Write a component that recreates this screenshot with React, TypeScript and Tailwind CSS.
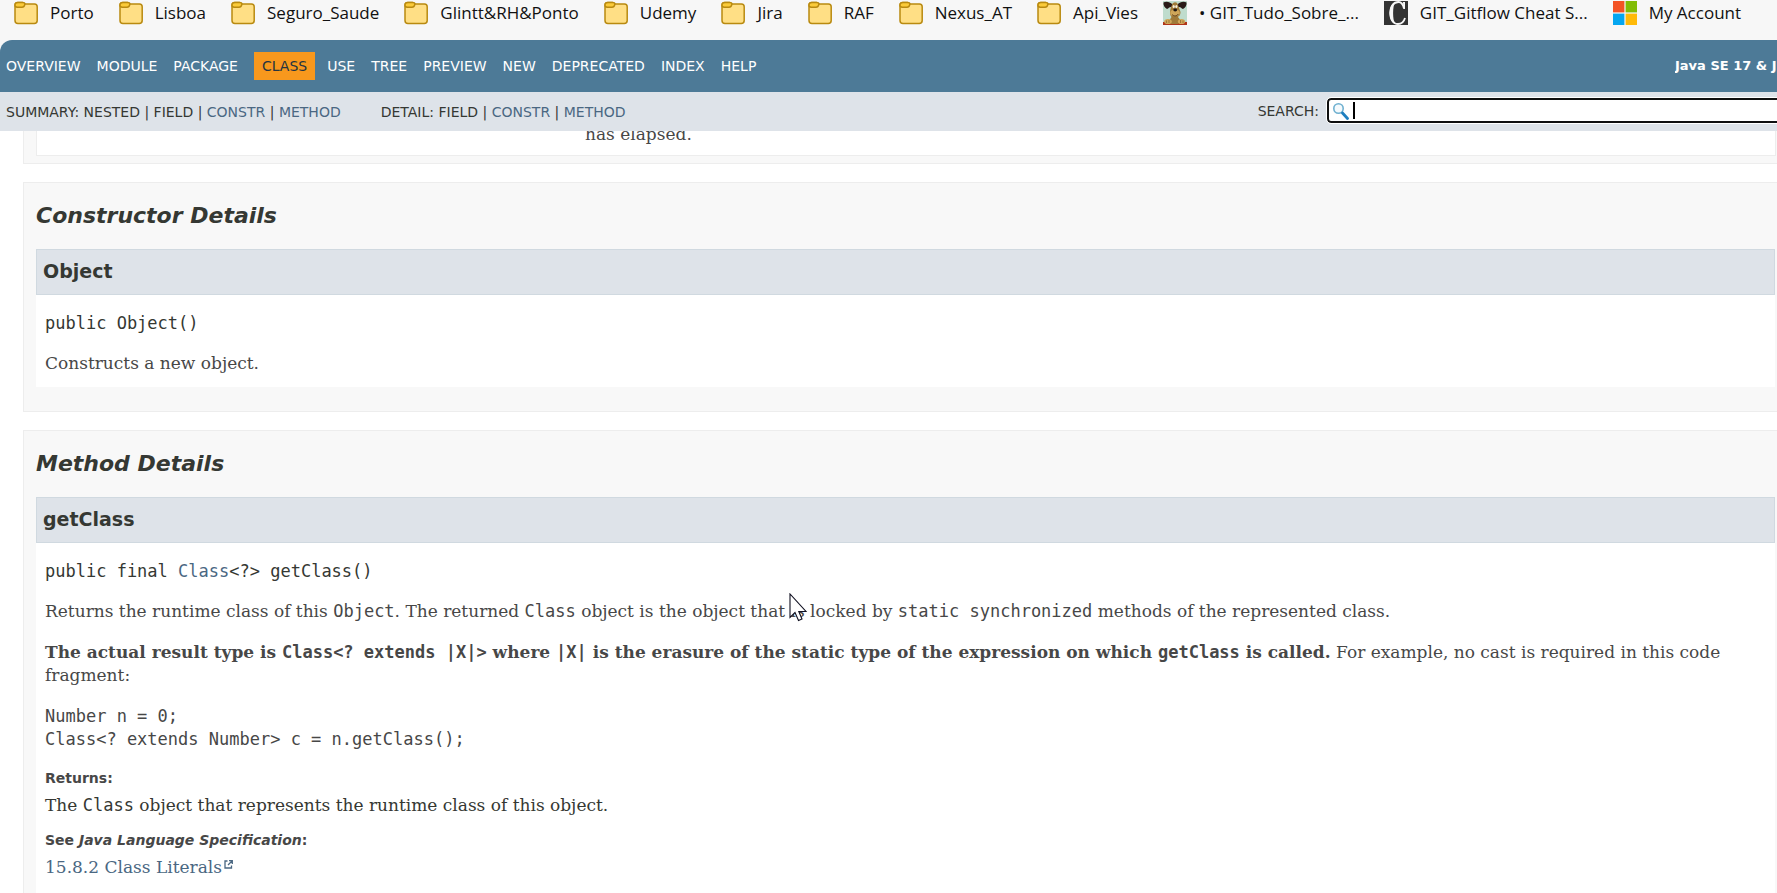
import type { ReactNode } from "react";

const folders = [
  "Porto",
  "Lisboa",
  "Seguro_Saude",
  "Glintt&RH&Ponto",
  "Udemy",
  "Jira",
  "RAF",
  "Nexus_AT",
  "Api_Vies",
];

function FolderIcon() {
  return (
    <svg width="24" height="24" viewBox="0 0 24 24" className="shrink-0" aria-hidden="true">
      <path
        d="M1 4.5C1 2.6 2 1.6 3.8 1.6H8.5L11 3H20.5C22.3 3 23.2 4 23.2 5.8V19.4C23.2 21.4 22.2 22.4 20.2 22.4H4C2 22.4 1 21.4 1 19.4Z"
        fill="#ffdf85"
        stroke="#b98a10"
        strokeWidth="1.5"
      />
      <path
        d="M1 4C1 2.400 2 1.400 3.800 1.400H8.500C10.400 1.400 11.200 2.400 10.800 3.600C10.400 5.200 9.400 6.200 8 6.200H3.200C1.800 6.200 1 5.400 1 4Z"
        fill="#fbcb3a"
        stroke="#b98a10"
        strokeWidth="1.5"
      />
    </svg>
  );
}

function DogIcon() {
  return (
    <svg width="24" height="24" viewBox="0 0 24 24" className="shrink-0" aria-hidden="true">
      <rect width="24" height="24" fill="#bfdccd" />
      <path d="M0 21H24V24H0Z" fill="#b03418" />
      <path d="M9.500 3.500C7 0.500 3 0 0.500 1.500C0 4 1.500 6.500 4 8C6 7.500 6 5.500 9 6Z" fill="#2a1a18" />
      <path d="M14.500 3.500C17 0.500 21 0 23.500 1.500C24 4 22.500 6.500 20 8C18 7.500 18 5.500 15 6Z" fill="#2a1a18" />
      <path d="M9 4C9.500 1 14 0 15 4L17.500 11C17.500 15 15.500 15 15 16L18 20L15 23H8L6 20L8.500 16C6 13 7 8 9 4Z" fill="#a07a38" />
      <ellipse cx="12" cy="12" rx="4.800" ry="3.200" fill="#cfa659" />
      <path d="M9 13.500C11 15.500 13.500 15.500 15.500 13" fill="none" stroke="#5a3a1c" />
      <ellipse cx="12.200" cy="9" rx="1.900" ry="1.400" fill="#1c1412" />
      <ellipse cx="10.700" cy="5.600" rx="1.100" ry="1.500" fill="#f4efdc" />
      <ellipse cx="13.400" cy="5.600" rx="1.100" ry="1.500" fill="#f4efdc" />
      <ellipse cx="5" cy="20.500" rx="3.800" ry="2.600" fill="#cfa659" />
      <ellipse cx="18.500" cy="20.500" rx="3.600" ry="2.600" fill="#cfa659" />
      <path d="M3.500 19.500V22M6 19V22M17.500 19V22M20 19.500V22" stroke="#8a642c" strokeWidth="0.700" />
    </svg>
  );
}

function CheatSheetIcon() {
  return (
    <svg width="24" height="24" viewBox="0 0 24 24" className="shrink-0" aria-hidden="true">
      <rect width="24" height="24" fill="#333333" />
      <path
        d="M20 7.500C19 3 17 1 14.500 1C9.500 1 6.500 5.500 6.500 12C6.500 18.500 9.500 23 14 23C17.500 23 20 20.500 21 17"
        fill="none"
        stroke="#f7f7f7"
        strokeWidth="1.800"
      />
      <path d="M19 1H21V8H19.500Z" fill="#f7f7f7" />
      <path d="M11 1C3.500 4 3.500 20 11 23C8.500 18 8.500 6 11 1Z" fill="#f7f7f7" />
    </svg>
  );
}

function MicrosoftIcon() {
  return (
    <svg width="24" height="24" viewBox="0 0 24 24" className="shrink-0" aria-hidden="true">
      <path d="M0 0H11.400V11.400H0Z" fill="#f35325" />
      <path d="M12.600 0H24V11.400H12.600Z" fill="#81bc06" />
      <path d="M0 12.600H11.400V24H0Z" fill="#05a6f0" />
      <path d="M12.600 12.600H24V24H12.600Z" fill="#ffba08" />
    </svg>
  );
}

function Bookmark({ icon, label }: { icon: ReactNode; label: string }) {
  return (
    <a href="#" className="flex shrink-0 items-center gap-3 whitespace-nowrap">
      {icon}
      <span>{label}</span>
    </a>
  );
}

function BookmarksBar() {
  return (
    <nav
      aria-label="Bookmarks"
      className="flex h-10 items-start gap-[25px] overflow-hidden bg-[#f7f7f7] pl-3.5 font-['Open_Sans',sans-serif] text-[17px] leading-[26px] text-[#111111]"
    >
      {folders.map((name) => (
        <Bookmark key={name} icon={<FolderIcon />} label={name} />
      ))}
      <Bookmark icon={<DogIcon />} label="• GIT_Tudo_Sobre_..." />
      <Bookmark icon={<CheatSheetIcon />} label="GIT_Gitflow Cheat S..." />
      <Bookmark icon={<MicrosoftIcon />} label="My Account" />
    </nav>
  );
}

function NavLinks({ names }: { names: string[] }) {
  return (
    <ul className="flex items-center gap-4 uppercase">
      {names.map((name) => (
        <li key={name}>
          <a href="#">{name}</a>
        </li>
      ))}
    </ul>
  );
}

function TopNav() {
  return (
    <div className="bg-[#f7f7f7]">
      <nav
        aria-label="Documentation"
        className="flex h-[52px] items-center overflow-hidden rounded-tl-xl bg-[#4d7a97] pl-1.5 text-sm text-white"
      >
        <NavLinks names={["Overview", "Module", "Package"]} />
        <span className="mr-3 ml-4 bg-[#f8981d] px-2 py-1 text-[#253441] uppercase">Class</span>
        <NavLinks names={["Use", "Tree", "Preview", "New", "Deprecated", "Index", "Help"]} />
        <div className="ml-auto w-[102px] overflow-hidden text-[13px] font-bold whitespace-nowrap">
          Java SE 17 &amp; JDK 17
        </div>
      </nav>
    </div>
  );
}

function SubLinks({ label, plain }: { label: string; plain: string[] }) {
  return (
    <div className="whitespace-pre">
      {label}: {plain.join(" | ")} |{" "}
      <a href="#" className="text-[#4a6782]">
        CONSTR
      </a>{" "}
      |{" "}
      <a href="#" className="text-[#4a6782]">
        METHOD
      </a>
    </div>
  );
}

function SubNav() {
  return (
    <div className="flex h-[39px] items-center overflow-hidden bg-[#dee3e9] pl-1.5 text-sm text-[#353833]">
      <div className="flex gap-10">
        <SubLinks label="SUMMARY" plain={["NESTED", "FIELD"]} />
        <SubLinks label="DETAIL" plain={["FIELD"]} />
      </div>
      <div className="-mr-2 ml-auto flex items-center gap-2 pb-0.5">
        <label htmlFor="search">SEARCH:</label>
        <div className="flex h-[25px] w-[458px] items-center gap-1 rounded-[4px] border-2 border-[#101010] bg-white pl-1 outline outline-white">
          <svg width="16" height="18" viewBox="0 0 16 18" className="shrink-0" aria-hidden="true">
            <circle cx="5.500" cy="6.500" r="4.700" fill="#f4fafd" stroke="#6fb0d0" strokeWidth="1.600" />
            <path d="M9.500 11L14.500 16.500" stroke="#1f7fbf" strokeWidth="2.800" strokeLinecap="round" />
          </svg>
          <div className="h-[17px] w-0.5 bg-black" />
          <input id="search" type="text" className="min-w-0 flex-1 bg-transparent outline-none" />
        </div>
      </div>
    </div>
  );
}

function DetailSection({ title, member, children }: { title: string; member: string; children: ReactNode }) {
  return (
    <section className="mt-[18px] border border-r-0 border-[#ededed] bg-[#f8f8f8] pr-0.5 pb-6 pl-3">
      <h2 className="pt-[19px] pb-[19px] font-['DejaVu_Sans',sans-serif] text-[22px] leading-7 font-bold text-[#353833] italic">
        {title}
      </h2>
      <h3 className="border border-[#d0d9e0] bg-[#dee3e9] px-1.5 pt-[7px] pb-[9px] font-['DejaVu_Sans',sans-serif] text-[19px] leading-7 font-bold text-[#353833]">
        {member}
      </h3>
      <div className="bg-white px-[9px] pt-[17px] pb-3">{children}</div>
    </section>
  );
}

function Code({ children }: { children: ReactNode }) {
  return <code className="font-['DejaVu_Sans_Mono',monospace] text-[17px]">{children}</code>;
}

function Signature({ children }: { children: ReactNode }) {
  return (
    <div className="font-['DejaVu_Sans_Mono',monospace] text-[17px] leading-[23px] text-[#353833]">{children}</div>
  );
}

function ExternalIcon() {
  return (
    <svg width="9" height="9" viewBox="0 0 9 9" className="mb-2 ml-0.5 inline-block" aria-hidden="true">
      <path d="M3.500 1H1V8H7.500V5.500M5 0.700H8.300V4M8 1L4 5" fill="none" stroke="#4a6782" strokeWidth="1.300" />
    </svg>
  );
}

function Pointer() {
  return (
    <svg width="19" height="29" viewBox="0 0 19 29" className="absolute top-[-7px] left-[744px]" aria-hidden="true">
      <path
        d="M1 1V24.500L6 19.500L9.500 27.500L13 26L9.800 18.500H17Z"
        fill="#ffffff"
        stroke="#101020"
        strokeWidth="1.100"
      />
    </svg>
  );
}

export default function App() {
  return (
    <div className="flex h-screen flex-col overflow-hidden bg-white font-['DejaVu_Sans',sans-serif]">
      <BookmarksBar />
      <TopNav />
      <SubNav />
      <main className="min-h-0 flex-1 overflow-hidden pl-[23px] font-['DejaVu_Serif',serif] text-[17px] leading-[23px] text-[#474747]">
        <section className="-mt-2.5 border border-r-0 border-[#ededed] bg-[#f8f8f8] pr-px pb-[7px] pl-3">
          <div className="border border-[#ededed] bg-white pb-[9px] pl-[548px]">has elapsed.</div>
        </section>
        <DetailSection title="Constructor Details" member="Object">
          <Signature>public Object()</Signature>
          <p className="mt-[17px]">Constructs a new object.</p>
        </DetailSection>
        <DetailSection title="Method Details" member="getClass">
          <Signature>
            public final{" "}
            <a href="#" className="text-[#4a6782]">
              Class
            </a>
            &lt;?&gt; getClass()
          </Signature>
          <div className="relative mt-[17px]">
            <p>
              Returns the runtime class of this <Code>Object</Code>. The returned <Code>Class</Code> object is the
              object that is locked by <Code>static synchronized</Code> methods of the represented class.
            </p>
            <Pointer />
          </div>
          <p className="mt-[18px]">
            <b>
              The actual result type is <Code>Class&lt;? extends |X|&gt;</Code> where <Code>|X|</Code> is the erasure
              of the static type of the expression on which <Code>getClass</Code> is called.
            </b>{" "}
            For example, no cast is required in this code fragment:
          </p>
          <pre className="mt-[18px] font-['DejaVu_Sans_Mono',monospace] text-[17px] leading-[23px]">
            {"Number n = 0;\nClass<? extends Number> c = n.getClass();"}
          </pre>
          <dl className="pb-6">
            <dt className="mt-4 font-['DejaVu_Sans',sans-serif] text-sm leading-[23px] font-bold">Returns:</dt>
            <dd className="mt-1 text-[#353833]">
              The <Code>Class</Code> object that represents the runtime class of this object.
            </dd>
            <dt className="mt-3 font-['DejaVu_Sans',sans-serif] text-sm leading-[23px] font-bold">
              See <i>Java Language Specification</i>:
            </dt>
            <dd className="mt-1">
              <a href="#" className="text-[#4a6782]">
                15.8.2 Class Literals
                <ExternalIcon />
              </a>
            </dd>
          </dl>
        </DetailSection>
      </main>
    </div>
  );
}
